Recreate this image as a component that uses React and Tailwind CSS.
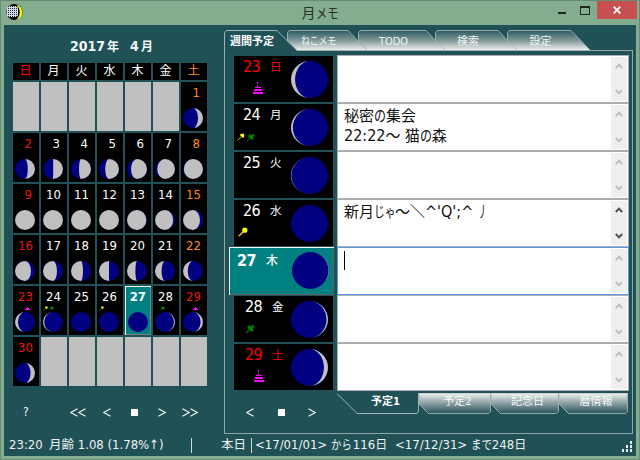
import React from "react";

const LIT = "#c0c0c0";
const DARK = "#000080";

// Moon disc: `lit` is the illuminated fraction, `side` the illuminated limb.
function Moon({ size, lit, side = "R" }) {
  const r = size / 2;
  const rx = Math.abs(1 - 2 * lit) * r;
  const outer = side === "R" ? 1 : 0;
  const inner = lit < 0.5 ? 1 - outer : outer;
  return (
    <svg width={size} height={size} viewBox={`0 0 ${size} ${size}`} className="block shrink-0">
      <circle cx={r} cy={r} r={r} fill={lit >= 1 ? LIT : DARK} />
      {lit > 0 && lit < 1 && (
        <path d={`M${r} 0A${r} ${r} 0 0 ${outer} ${r} ${size}A${rx} ${r} 0 0 ${inner} ${r} 0Z`} fill={LIT} />
      )}
    </svg>
  );
}

// Kana run set narrower than the surrounding kanji, `w` pixels per run.
function Kana({ children, w, k = 0.8 }) {
  return (
    <span className="inline-block origin-left whitespace-nowrap text-left [font-feature-settings:normal]" style={{ width: w, transform: `scaleX(${k})` }}>
      {children}
    </span>
  );
}

function Pin({ color, w = 10, round = false }) {
  return (
    <svg width={w} height={w} viewBox="0 0 10 10" className="block shrink-0">
      <path d="M0.8 9.2L5 5" stroke={color} strokeWidth="1.1" />
      {round ? <circle cx="6.8" cy="3.2" r="2.6" fill={color} /> : <path d="M4 1.2L6 2.6L8 0.8L9.6 2.6L7.8 4.6L8.8 6.6L6.4 7.6L2.2 3.8Z" fill={color} />}
    </svg>
  );
}

function YellowPin({ w = 10 }) {
  return (
    <svg width={w} height={w} viewBox="0 0 10 10" className="block shrink-0">
      <path d="M0.8 9.2L5 5" stroke="#c0c000" strokeWidth="1.2" />
      <path d="M4 1.6L5.6 0.8H9V5L7.6 6L6 5.2L4.2 3.2Z" fill="#ffff00" />
    </svg>
  );
}

function Cake({ small = false }) {
  return small ? (
    <svg width="5" height="4" viewBox="0 0 5 4" className="block" shapeRendering="crispEdges">
      <path d="M2 0h1v1h1v1h1v1H0V2h1V1h1z" fill="#f0f" />
    </svg>
  ) : (
    <svg width="10" height="12" viewBox="0 0 10 12" className="block" shapeRendering="crispEdges">
      <path d="M4 0h1v2h-1zM4 3h1v2h-1zM2 5h6v1H2zM1 7h8v2H1zM0 10h10v2H0z" fill="#f0f" />
    </svg>
  );
}

const RED = "text-[#ff0000]";
const ORANGE = "text-[#ff8c10]";
const DIM_RED = "text-[#e81818]";

const heads = [
  ["日", RED], ["月", "text-white"], ["火", "text-white"], ["水", "text-white"],
  ["木", "text-white"], ["金", "text-white"], ["土", ORANGE],
];

const phases = {
  1: [0.25, "R"], 2: [0.36, "R"], 3: [0.49, "R"], 4: [0.6, "R"], 5: [0.69, "R"], 6: [0.8, "R"], 7: [0.89, "R"],
  8: [0.96, "R"], 9: [1, "R"], 10: [1, "R"], 11: [1, "R"], 12: [1, "R"], 13: [0.97, "L"], 14: [0.91, "L"],
  15: [0.85, "L"], 16: [0.8, "L"], 17: [0.7, "L"], 18: [0.6, "L"], 19: [0.5, "L"], 20: [0.42, "L"], 21: [0.33, "L"],
  22: [0.24, "L"], 23: [0.15, "L"], 24: [0.06, "L"], 25: [0, "L"], 26: [0, "L"], 27: [0, "R"], 28: [0.05, "R"],
  29: [0.12, "R"], 30: [0.22, "R"],
};

const cells = [...Array(6).fill(0), ...Array.from({ length: 30 }, (_, i) => i + 1), ...Array(6).fill(0)];

function dayColor(day, col) {
  if (col === 0 || day === 29) return DIM_RED;
  return col === 6 ? ORANGE : "text-white";
}

function Marks({ day }) {
  if (day === 23 || day === 29) return <span className="pl-[12px] pt-[1px]"><Cake small /></span>;
  if (day === 24) return <span className="flex gap-[1px] pl-[2px]"><YellowPin w={5} /><Pin color="#009000" w={5} /></span>;
  if (day === 26) return <span className="pl-[2px]"><YellowPin w={5} /></span>;
  if (day === 28) return <span className="pl-[7px]"><Pin color="#009000" w={5} /></span>;
  return null;
}

function DayCell({ day, col }) {
  if (!day) return <div className="h-[49px] bg-[#c0c0c0]" />;
  const today = day === 27;
  const [lit, side] = phases[day];
  return (
    <div className={today ? "h-[49px] bg-[#008080] shadow-[inset_1px_1px_0_#fff,inset_-1px_-1px_0_#808080]" : "h-[49px] bg-black"}>
      <div className={`h-[20px] text-right text-[13px] leading-[21px] ${day < 10 ? "pr-[7px]" : today ? "pr-[5px]" : "pr-[6px]"} ${today ? "font-bold text-white" : dayColor(day, col)}`}>{day}</div>
      <div className="flex h-[6px]"><Marks day={day} /></div>
      <div className={today ? "pl-[3px]" : "pl-[2px]"}><Moon size={20} lit={lit} side={side} /></div>
    </div>
  );
}

function TopTab({ label, w, active = false, className = "" }) {
  const id = `top-${w}-${active ? "a" : "i"}`;
  return (
    <div className={`relative h-[21px] shrink-0 ${className}`} style={{ width: w }}>
      <svg width={w} height="21" className="absolute inset-0">
        <defs>
          <linearGradient id={id} x1="0" y1="0" x2="0" y2="1">
            <stop offset="0" stopColor="#2c5b60" />
            <stop offset="0.5" stopColor="#82989a" />
            <stop offset="1" stopColor="#f0f2f2" />
          </linearGradient>
        </defs>
        {active ? (
          <path d={`M0.5 21V3L2.5 0.5H${w - 20}L${w} 20.5`} fill="#1f5156" stroke="#9fb4b6" />
        ) : (
          <path d={`M0.5 11V2.5L2.5 0.5H${w - 20}L${w - 0.5} 20.5H9.5Z`} fill={`url(#${id})`} stroke="#a4b4b6" strokeWidth="0.9" />
        )}
      </svg>
      <span className={`absolute inset-x-0 top-[5px] text-center text-[11px] leading-[14px] ${active ? "pr-[17px] font-bold text-white" : "pr-[17px] text-[#eef3f3]"}`}>{label}</span>
    </div>
  );
}

function BottomTab({ label, w, active = false }) {
  const id = `bottom-${w}`;
  return (
    <div className="relative h-[21px] shrink-0" style={{ width: w }}>
      <svg width={w} height="21" className="absolute inset-0">
        <defs>
          <linearGradient id={id} x1="0" y1="0" x2="0" y2="1">
            <stop offset="0" stopColor="#f0f2f2" />
            <stop offset="0.5" stopColor="#8a9fa1" />
            <stop offset="1" stopColor="#255459" />
          </linearGradient>
        </defs>
        {active ? (
          <path d={`M0 0.5L20 20.5H${w - 2}L${w - 0.5} 18V0`} fill="#1f5156" stroke="#9fb4b6" />
        ) : (
          <path d={`M0 0H${w - 0.5}V18.5L${w - 2.5} 20.5H9.5L0 11Z`} fill={`url(#${id})`} stroke="#a4b4b6" strokeWidth="0.9" />
        )}
      </svg>
      <span className={`absolute inset-x-0 top-[2px] text-center text-[11px] leading-[14px] ${active ? "pl-[15px] font-bold text-white" : "pl-[5px] text-[#f6f9f9]"}`}>{label}</span>
    </div>
  );
}

const week = [
  { d: 23, w: "日", lit: 0.11, side: "L", color: RED, pad: "pl-[9px]", mark: <span className="pl-[19px]"><Cake /></span>, text: [] },
  {
    d: 24, w: "月", lit: 0.05, side: "L", color: "text-white", pad: "pl-[9px]",
    mark: <span className="flex gap-px pl-[3px] pt-[3px]"><YellowPin w={8} /><Pin w={9} color="#008000" /></span>,
    text: [
      <>秘密<Kana w={12}>の</Kana>集会</>,
      <><span className="text-[16px]">22:22</span><Kana w={15} k={1}>～</Kana> 猫<Kana w={12}>の</Kana>森</>,
    ],
  },
  { d: 25, w: "火", lit: 0.012, side: "L", color: "text-white", pad: "pl-[9px]", text: [] },
  {
    d: 26, w: "水", lit: 0, side: "L", color: "text-white", pad: "pl-[9px]",
    mark: <span className="pl-[4px] pt-[1px]"><Pin round w={10} color="#ffff00" /></span>,
    text: [
      <>新月<Kana w={21} k={0.72}>じゃ</Kana><Kana w={15} k={1}>～</Kana><Kana w={15} k={1}>＼</Kana><span className="text-[16px]">^'Q';^</span> <Kana w={9} k={0.65}>丿</Kana></>,
    ],
    live: true,
  },
  { d: 27, w: "木", lit: 0.012, side: "R", today: true, text: [] },
  { d: 28, w: "金", lit: 0.04, side: "R", color: "text-white", pad: "pl-[11px]", mark: <span className="pl-[11px] pt-[2px]"><Pin w={10} color="#008000" /></span>, text: [] },
  { d: 29, w: "土", lit: 0.11, side: "R", color: RED, pad: "pl-[11px]", mark: <span className="pl-[20px]"><Cake /></span>, text: [] },
];

function WeekDay({ item }) {
  if (item.today) {
    return (
      <div className="-ml-[5px] -mt-px flex h-[48px] w-[105px] bg-[#008080] pl-[8px] text-white shadow-[inset_1px_1px_0_#fff,inset_-1px_-1px_0_#606060]">
        <div className="flex h-[28px] w-[55px] gap-[9px]">
          <span className="w-[20px] text-[16px] font-bold leading-[28px] tracking-[-0.4px]">{item.d}</span>
          <span className="text-[12px] font-medium leading-[29px]">{item.w}</span>
        </div>
        <div className="pt-[5px]"><Moon size={37} lit={item.lit} side={item.side} /></div>
      </div>
    );
  }
  return (
    <div className="flex h-[46px] w-[99px] bg-black">
      <div className="w-[57px]">
        <div className={`flex h-[26px] gap-[8px] ${item.pad} ${item.color}`}>
          <span className="w-[19px] text-[16px] leading-[22px] tracking-[-0.6px]">{item.d}</span>
          <span className="text-[11.5px] leading-[23px]">{item.w}</span>
        </div>
        <div className="flex">{item.mark}</div>
      </div>
      <div className="pt-[5px]"><Moon size={37} lit={item.lit} side={item.side} /></div>
    </div>
  );
}

function Memo({ item }) {
  const arrow = item.live ? "#505050" : "#bdbdbd";
  return (
    <div className={`flex h-[48px] justify-between border bg-white ${item.today ? "border-[#5a9ae0]" : "border-[#abadb3]"}`}>
      <div className="whitespace-pre pl-[6px] pt-[2px] text-[15px] leading-[20px] text-[#101010]">
        {item.today && <span className="mt-[1px] block h-[19px] w-px bg-black" />}
        {item.text.map((t, i) => <div key={i} className="h-[20px]">{t}</div>)}
      </div>
      <div className="mr-px mt-px flex h-[44px] w-[16px] flex-col items-center justify-between bg-[#efefef] py-[6px]">
        <svg width="8" height="6" viewBox="0 0 8 6"><path d="M0.8 5L4 1.6L7.2 5" fill="none" stroke={arrow} strokeWidth="2" /></svg>
        <svg width="8" height="6" viewBox="0 0 8 6"><path d="M0.8 1L4 4.4L7.2 1" fill="none" stroke={arrow} strokeWidth="2" /></svg>
      </div>
    </div>
  );
}

function Chevrons({ n = 1, left = false }) {
  const one = left ? "M7.5 0.8L0.8 4.5L7.5 8.2" : "M0.5 0.8L7.2 4.5L0.5 8.2";
  return (
    <span className="flex">
      {Array.from({ length: n }, (_, i) => (
        <svg key={i} width="8" height="9" viewBox="0 0 8 9"><path d={one} fill="none" stroke="#f4f6f6" strokeWidth="1.1" /></svg>
      ))}
    </span>
  );
}

export default function App() {
  return (
    <div className="flex h-[460px] w-[640px] flex-col overflow-hidden border border-[#668c73] bg-[#84ad90] [font-family:'DejaVu_Sans_Condensed','DejaVu_Sans','Noto_Sans_CJK_JP',sans-serif] [font-stretch:condensed]">
      <header className="flex h-[24px] shrink-0">
        <div className="w-[190px] pl-[5px] pt-[3px]">
          <svg width="17" height="17" viewBox="0 0 17 17">
            <defs>
              <pattern id="dots" width="2" height="2" patternUnits="userSpaceOnUse">
                <rect width="2" height="2" fill="#d8d8e8" />
                <rect width="1" height="1" fill="#202038" />
              </pattern>
            </defs>
            <circle cx="8.5" cy="8" r="8" fill="#000" />
            <path d="M10 0.4A8 8 0 0 1 10 16A10 10 0 0 0 10 0.4Z" fill="#ff0" />
            <rect x="1" y="2" width="11" height="11" rx="2" fill="url(#dots)" />
          </svg>
        </div>
        <div className="w-[257px] text-center text-[14px] leading-[24px] text-[#243028]">月<Kana w={22}>メモ</Kana></div>
        <div className="flex flex-1 justify-end pr-[2px]">
          <svg width="34" height="14" viewBox="0 0 34 14" className="mr-[6px]" shapeRendering="crispEdges">
            <path d="M1 11h8v2H1z" fill="#1c241e" />
            <path d="M23.5 6h9v7h-9z" fill="none" stroke="#1c241e" strokeWidth="1" />
            <path d="M23 5h10v2H23z" fill="#1c241e" />
          </svg>
          <div className="flex h-[18px] w-[40px] items-center justify-center bg-[#c75050]">
            <svg width="8" height="8" viewBox="0 0 8 8"><path d="M0.7 0.7L7.3 7.3M7.3 0.7L0.7 7.3" stroke="#fff" strokeWidth="1.8" /></svg>
          </div>
        </div>
      </header>

      <main className="mx-[3px] flex h-[431px] flex-col bg-[#1f5156]">
        <div className="flex h-[409px]">
          <section className="w-[220px] shrink-0 pl-[9px]">
            <h1 className="flex h-[38px] items-baseline pl-[57px] pt-[11px] text-[14px] font-bold leading-[20px] text-[#f4f6f6]">
              <span className="w-[37px]">2017</span>
              <span className="w-[23px] text-[12px]">年</span>
              <span className="w-[11px]">4</span>
              <span className="text-[12px]">月</span>
            </h1>
            <div className="grid grid-cols-[repeat(7,26px)] gap-[2px]">
              {heads.map(([t, c]) => (
                <div key={t} className={`h-[17px] overflow-hidden bg-black pr-px text-center text-[12px] leading-[17px] ${c}`}>{t}</div>
              ))}
              {cells.map((d, i) => <DayCell key={i} day={d} col={i % 7} />)}
            </div>
            <div className="flex h-[52px] items-center text-[12px] text-[#f4f6f6]">
              <span className="w-[57px] pl-[10px]">?</span>
              <span className="w-[33px]"><Chevrons n={2} left /></span>
              <span className="w-[28px]"><Chevrons left /></span>
              <span className="mr-[20px] h-[7px] w-[7px] bg-white" />
              <span className="w-[24px]"><Chevrons /></span>
              <Chevrons n={2} />
            </div>
          </section>

          <section className="w-[409px] pt-[5px]">
            <div className="flex h-[21px]">
              <TopTab label="週間予定" w={73} active className="z-50" />
              <TopTab label={<Kana w={36}>ねこメモ</Kana>} w={81} className="-ml-[10px] z-40" />
              <TopTab label="TODO" w={88} className="-ml-[10px] z-30" />
              <TopTab label="検索" w={83} className="-ml-[11px] z-20" />
              <TopTab label="設定" w={84} className="-ml-[11px] z-10" />
              <div className="-ml-px flex-1 border-b border-[#8fa8aa]" />
            </div>
            <div className="h-[383px] border border-t-0 border-[#8fa8aa] pl-[9px] pr-[3px] pt-[5px]">
              <div className="flex h-[337px] justify-between">
                <div className="flex w-[99px] flex-col gap-[2px]">
                  {week.map((it) => <div key={it.d} className="h-[46px]"><WeekDay item={it} /></div>)}
                </div>
                <div className="-mt-px w-[292px]">
                  {week.map((it) => <Memo key={it.d} item={it} />)}
                </div>
              </div>
              <div className="flex h-[40px] pl-[11px]">
                <div className="flex h-[38px] w-[92px] items-center">
                  <span className="w-[33px] pl-px"><Chevrons left /></span>
                  <span className="mr-[23px] h-[7px] w-[7px] bg-white" />
                  <Chevrons />
                </div>
                <div className="flex">
                  <BottomTab label="予定1" w={82} active />
                  <BottomTab label="予定2" w={72} />
                  <BottomTab label="記念日" w={68} />
                  <BottomTab label="暦情報" w={69} />
                </div>
              </div>
            </div>
          </section>
        </div>

        <footer className="flex h-[22px] items-center whitespace-pre pl-[5px] text-[13px] leading-[22px] text-[#eef2f2]">
          <span className="w-[40px]">23:20</span>
          <span className="w-[142px]"><span className="text-[12.5px]">月齢</span> 1.08 (1.78%↑)</span>
          <span className="h-[15px] w-px bg-[#d0dada]" />
          <span className="w-[59px] pl-[29px] text-[12.5px]">本日</span>
          <span className="h-[15px] w-px bg-[#d0dada]" />
          <span className="w-[143px] pl-[3px]">&lt;17/01/01&gt; <Kana w={22}>から</Kana>116<span className="text-[12px]">日</span></span>
          <span className="flex-1 pl-0">&lt;17/12/31&gt; <Kana w={21}>まで</Kana>248<span className="text-[12px]">日</span></span>
          <svg width="12" height="12" viewBox="0 0 12 12" className="mr-[3px] mt-[3px]" shapeRendering="crispEdges">
            <path d="M9 0h2v3H9zM5 4h2v3H5zM9 4h2v3H9zM1 8h2v3H1zM5 8h2v3H5zM9 8h2v3H9z" fill="#e8ecec" />
          </svg>
        </footer>
      </main>
    </div>
  );
}
